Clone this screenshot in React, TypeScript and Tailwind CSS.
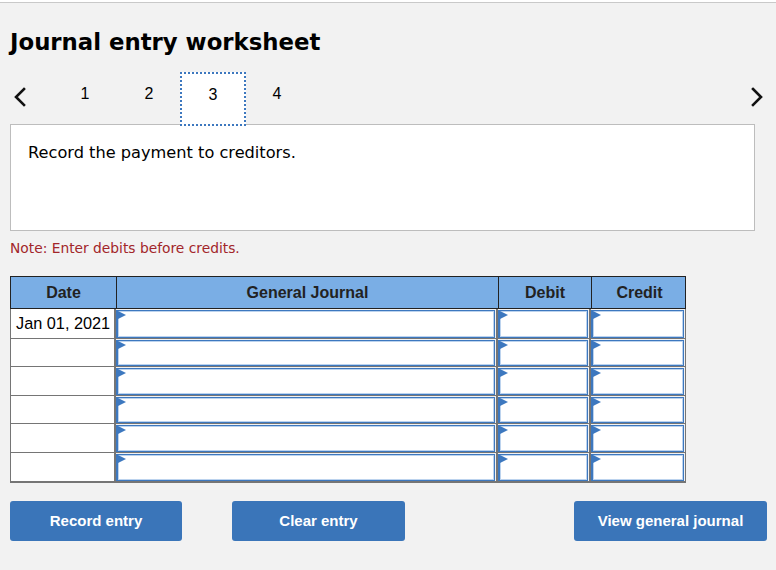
import React from 'react'

const rows = ['Jan 01, 2021', '', '', '', '', '']
const rowHeights = ['h-[29px]', 'h-[28px]', 'h-[29px]', 'h-[28px]', 'h-[29px]', 'h-[29px]']

function Chevron({ dir }: { dir: 'left' | 'right' }) {
  return (
    <svg width="14" height="20" viewBox="0 0 14 20" className="block">
      <polyline
        points={dir === 'left' ? '11,2 3,10 11,18' : '3,2 11,10 3,18'}
        fill="none"
        stroke="#111"
        strokeWidth="2.6"
        strokeLinecap="square"
      />
    </svg>
  )
}

function EntryInput() {
  return (
    <div className="relative h-full w-full bg-white border border-[#3d78bf] border-l-2 shadow-[inset_0_0_0_1px_#bcd3ee]">
      <svg width="8" height="9" viewBox="0 0 8 9" className="absolute left-0 top-0">
        <polygon points="0,0 8,4 0,8" fill="#3d78bf" />
      </svg>
    </div>
  )
}

export default function App() {
  return (
    <div className="w-[776px] h-[570px] bg-white pt-[2px] font-['Liberation_Sans',Arial,sans-serif]">
      <div className="h-[568px] border-t border-[#c9c9c9] bg-[#f2f2f2] text-black">
        {/* title */}
        <h1 className="pt-[26px] pl-[10px] h-[69px] font-['DejaVu_Sans',Verdana,sans-serif] text-[22.8px] leading-[26px] font-bold">
          Journal entry worksheet
        </h1>

        {/* step nav */}
        <div className="flex items-center h-[52px] pl-[13px] pr-[12px]">
          <button className="w-[14px] h-[20px] mt-[-2px]">
            <Chevron dir="left" />
          </button>
          <div className="flex ml-[26px] h-full">
            {[1, 2, 3, 4].map((n) => (
              <div
                key={n}
                className={
                  n === 3
                    ? 'relative z-10 w-[66px] h-[54px] -mx-[1px] bg-white border-2 border-dotted border-[#3d78bf] flex items-center justify-center text-[16px] pb-[8px]'
                    : 'w-[64px] h-full flex items-center justify-center text-[16px] pb-[8px]'
                }
              >
                {n}
              </div>
            ))}
          </div>
          <button className="ml-auto w-[14px] h-[20px] mt-[-2px]">
            <Chevron dir="right" />
          </button>
        </div>

        {/* description */}
        <div className="mx-[10px] w-[745px] h-[107px] bg-white border border-[#bdbdbd] pt-[17px] pl-[17px] font-['DejaVu_Sans',Verdana,sans-serif] text-[16.2px] leading-[22px]">
          Record the payment to creditors.
        </div>

        <p className="mt-[8px] pl-[10px] h-[37px] font-['DejaVu_Sans',Verdana,sans-serif] text-[13.8px] leading-[19px] text-[#a2262a]">
          Note: Enter debits before credits.
        </p>

        {/* journal table */}
        <div className="ml-[10px] w-[676px]">
          <div className="grid grid-cols-[106px_382px_93px_95px] h-[33px] bg-[#7aaee5] border border-[#222] text-[16px] font-bold text-[#222]">
            <div className="flex items-center justify-center border-r border-[#222]">Date</div>
            <div className="flex items-center justify-center border-r border-[#222]">General Journal</div>
            <div className="flex items-center justify-center border-r border-[#222]">Debit</div>
            <div className="flex items-center justify-center">Credit</div>
          </div>
          <div className="border-x border-b-2 border-[#757575]">
            {rows.map((d, i) => (
              <div
                key={i}
                className={`grid grid-cols-[105px_382px_93px_94px] ${rowHeights[i]} ${i > 0 ? 'border-t border-[#757575]' : ''}`}
              >
                <div className="flex items-center pl-[5px] text-[16.3px] bg-white border-r-2 border-[#757575]">{d}</div>
                <div className="pr-[1px] pt-[1px] border-r-2 border-[#757575]">
                  <EntryInput />
                </div>
                <div className="pr-[1px] pt-[1px] border-r-2 border-[#757575]">
                  <EntryInput />
                </div>
                <div className="pr-[1px] pt-[1px]">
                  <EntryInput />
                </div>
              </div>
            ))}
          </div>
        </div>

        {/* actions */}
        <div className="flex mt-[18px] pl-[10px]">
          <button className="w-[172px] h-[40px] rounded-[3px] bg-[#3a75b9] text-white text-[15px] font-bold">
            Record entry
          </button>
          <button className="ml-[50px] w-[173px] h-[40px] rounded-[3px] bg-[#3a75b9] text-white text-[15px] font-bold">
            Clear entry
          </button>
          <button className="ml-[169px] w-[193px] h-[40px] rounded-[3px] bg-[#3a75b9] text-white text-[15px] font-bold">
            View general journal
          </button>
        </div>
      </div>
    </div>
  )
}
